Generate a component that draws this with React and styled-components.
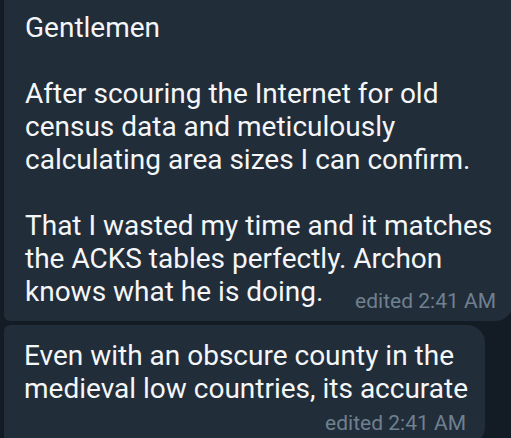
import React from "react";
import styled, { createGlobalStyle } from "styled-components";

const GlobalStyle = createGlobalStyle`
    html, body {
        margin: 0;
        padding: 0;
        background-color: #131b24;
        overflow: hidden;
    }
`;

const Chat = styled.div`
    display: flex;
    flex-direction: column;
    gap: 4px;
    padding-left: 4px;
    height: 438px;
    font-family: Roboto, "Noto Sans", sans-serif;
`;

const Bubble = styled.div`
    display: flow-root;
    box-sizing: border-box;
    width: ${(p) => p.$width}px;
    flex-shrink: 0;
    background-color: #222d3a;
    padding: ${(p) => (p.$cut ? "11px 17px 8px 21px" : "14px 19px 10px 20px")};
    border-radius: ${(p) => (p.$cut ? "0 0 18px 6px" : "6px 18px 18px 6px")};
`;

const Text = styled.div`
    color: #f4f6f8;
    font-size: 28px;
    line-height: 33px;
    white-space: pre;
`;

const Meta = styled.span`
    float: ${(p) => (p.$inline ? "right" : "none")};
    display: block;
    margin-top: ${(p) => (p.$inline ? "14px" : "6px")};
    text-align: right;
    color: #6f808f;
    font-size: 21px;
    line-height: 24px;
    white-space: nowrap;
`;

const App = () => {
    return (
        <>
            <GlobalStyle />
            <Chat>
                <Bubble $cut $width={509}>
                    <Text>
                        {"Gentlemen\n\nAfter scouring the Internet for old\ncensus data and meticulously\ncalculating area sizes I can confirm.\n\nThat I wasted my time and it matches\nthe ACKS tables perfectly. Archon\nknows what he is doing."}
                        <Meta $inline>edited 2:41 AM</Meta>
                    </Text>
                </Bubble>
                <Bubble $width={481}>
                    <Text>
                        {"Even with an obscure county in the\nmedieval low countries, its accurate"}
                    </Text>
                    <Meta>edited 2:41 AM</Meta>
                </Bubble>
            </Chat>
        </>
    );
};

export default App;
